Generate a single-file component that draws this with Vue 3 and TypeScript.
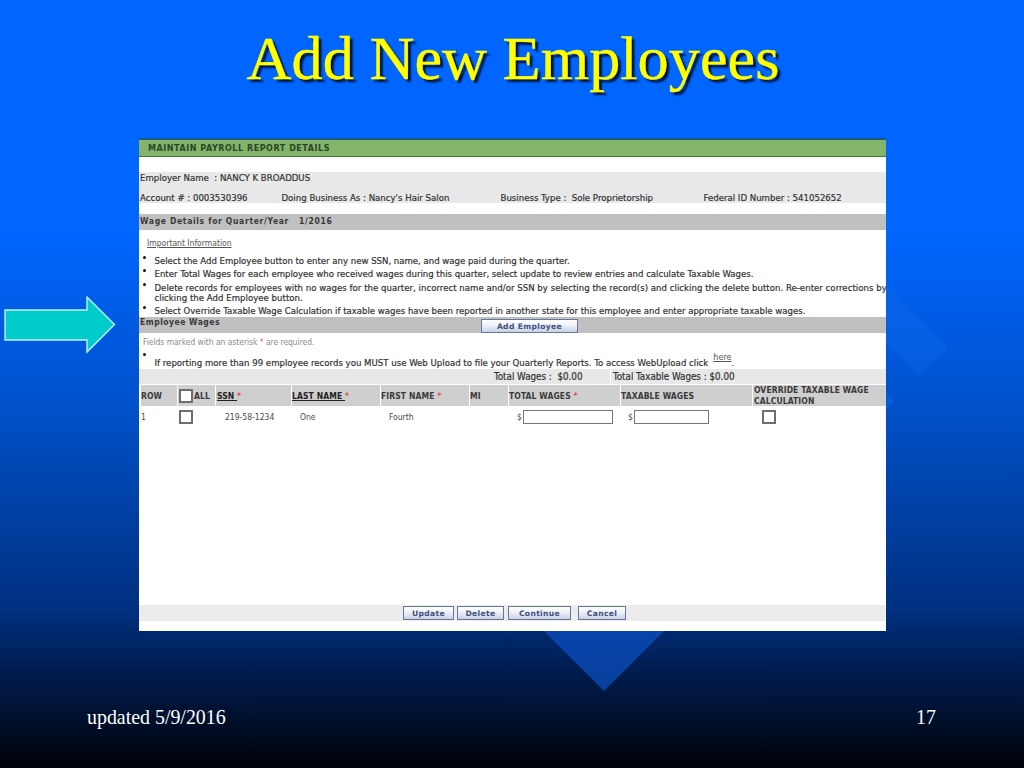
<script setup lang="ts">
const bullets: string[][] = [
  ['Select the Add Employee button to enter any new SSN, name, and wage paid during the quarter.'],
  ['Enter Total Wages for each employee who received wages during this quarter, select update to review entries and calculate Taxable Wages.'],
  ['Delete records for employees with no wages for the quarter, incorrect name and/or SSN by selecting the record(s) and clicking the delete button. Re-enter corrections by', 'clicking the Add Employee button.'],
  ['Select Override Taxable Wage Calculation if taxable wages have been reported in another state for this employee and enter appropriate taxable wages.'],
]
const actions = [
  { label: 'Update', cls: 'a-update' },
  { label: 'Delete', cls: 'a-delete' },
  { label: 'Continue', cls: 'a-continue' },
  { label: 'Cancel', cls: 'a-cancel' },
]
</script>

<template>
  <div class="slide">
    <svg class="backdrop" width="1024" height="768" viewBox="0 0 1024 768" aria-hidden="true">
      <defs>
        <linearGradient id="dia" gradientUnits="userSpaceOnUse" x1="0" y1="280" x2="0" y2="691">
          <stop offset="0" stop-color="#0564ec" />
          <stop offset="0.3" stop-color="#055bd8" />
          <stop offset="1" stop-color="#083f9e" />
        </linearGradient>
      </defs>
      <polygon points="948,347 919,376 790,247 819,218" fill="url(#dia)" />
      <polygon points="895,400 604,691 520,607 811,316" fill="url(#dia)" />
    </svg>

    <h1 class="title">Add New Employees</h1>

    <section class="panel">
      <div class="green">MAINTAIN PAYROLL REPORT DETAILS</div>
      <div class="info">
        <div class="info-line">Employer Name &nbsp;: NANCY K BROADDUS</div>
        <div class="info-line cols">
          <span class="c1">Account # : 0003530396</span>
          <span class="c2">Doing Business As : Nancy's Hair Salon</span>
          <span class="c3">Business Type : &nbsp;Sole Proprietorship</span>
          <span>Federal ID Number : 541052652</span>
        </div>
      </div>
      <div class="bar wage">Wage Details for Quarter/Year &nbsp; 1/2016</div>
      <div class="important"><span>Important Information</span></div>
      <ul class="list">
        <li v-for="(lines, i) in bullets" :key="i">
          <i class="dot"></i>
          <div><div v-for="line in lines" :key="line" class="line">{{ line }}</div></div>
        </li>
      </ul>
      <div class="bar emp">
        <span class="emp-title">Employee Wages</span>
        <button class="btn add" type="button">Add Employee</button>
      </div>
      <div class="fields">Fields marked with an asterisk <b>*</b> are required.</div>
      <div class="upload">
        <i class="dot"></i>
        <span class="line">If reporting more than 99 employee records you MUST use Web Upload to file your Quarterly Reports. To access WebUpload click</span>
        <a class="here">here</a><span class="period">.</span>
      </div>
      <div class="totals">
        <div class="t1">Total Wages : &nbsp;$0.00</div>
        <div class="t2">Total Taxable Wages : $0.00</div>
      </div>
      <div class="grid">
        <div class="th">ROW</div>
        <div class="th th-all"><input class="cb" type="checkbox" />ALL</div>
        <div class="th th-ssn"><u>SSN&nbsp;</u><em>*</em></div>
        <div class="th"><u>LAST NAME&nbsp;</u><em>*</em></div>
        <div class="th">FIRST NAME <em>*</em></div>
        <div class="th">MI</div>
        <div class="th">TOTAL WAGES <em>*</em></div>
        <div class="th">TAXABLE WAGES</div>
        <div class="th th-wrap">OVERRIDE TAXABLE WAGE CALCULATION</div>

        <div class="td">1</div>
        <div class="td"><input class="cb" type="checkbox" /></div>
        <div class="td ssn">219-58-1234</div>
        <div class="td last">One</div>
        <div class="td first">Fourth</div>
        <div class="td"></div>
        <div class="td money m1"><span>$</span><input class="field f1" type="text" /></div>
        <div class="td money m2"><span>$</span><input class="field f2" type="text" /></div>
        <div class="td over"><input class="cb" type="checkbox" /></div>
      </div>
      <div class="spacer"></div>
      <div class="actions">
        <button v-for="a in actions" :key="a.label" class="btn" :class="a.cls" type="button">{{ a.label }}</button>
      </div>
    </section>

    <svg class="arrow" width="120" height="62" viewBox="0 0 120 62" aria-hidden="true">
      <polygon points="5,14 87,14 87,1 114.5,28.5 87,56 87,44 5,44" fill="#00cccc" stroke="#c4f0f6" stroke-width="1.4" />
    </svg>

    <footer class="foot">
      <span>updated 5/9/2016</span>
      <span>17</span>
    </footer>
  </div>
</template>

<style>
html, body { margin: 0; background: #000; }
</style>

<style scoped>
.slide {
  position: relative;
  width: 1024px;
  height: 768px;
  overflow: hidden;
  background: linear-gradient(180deg, #0066ff 0, #0066ff 230px, #0052cc 400px, #003080 610px, #001a48 680px, #000308 768px);
  font-family: "DejaVu Sans Condensed", "DejaVu Sans", sans-serif;
}
.backdrop { position: absolute; left: 0; top: 0; }
.arrow { position: absolute; left: 0; top: 296px; }
.title {
  position: relative;
  margin: 0;
  height: 138px;
  box-sizing: border-box;
  padding: 23px 0 0 2px;
  text-align: center;
  font: 400 62.3px/70px "Liberation Serif", serif;
  color: #ffff00;
  text-shadow: 3px 3px 2px #00123a;
  -webkit-text-stroke: 0.4px #ffff00;
}
.panel {
  position: relative;
  display: flex;
  flex-direction: column;
  margin-left: 139px;
  width: 747px;
  height: 493px;
  overflow: hidden;
  background: #fff;
  border-top: 2px solid #1d5a86;
  box-sizing: border-box;
  color: #333;
  font-size: 9.5px;
  white-space: nowrap;
}
.green {
  flex: none;
  height: 16px;
  box-sizing: content-box;
  padding-left: 9px;
  background: #82b46a;
  border-bottom: 1px solid #3f7a3a;
  color: #2c4527;
  font: 700 8px/18px "DejaVu Sans", sans-serif;
  letter-spacing: 0.55px;
}
.info {
  flex: none;
  margin-top: 15px;
  height: 31px;
  background: #e8e8e8;
  font-size: 9.55px;
  -webkit-text-stroke: 0.2px #333;
}
.info-line { height: 10px; line-height: 10px; padding-left: 1px; }
.info-line:first-child { margin-top: 1px; }
.cols { display: flex; margin-top: 10px; }
.c1 { width: 141.5px; }
.c2 { width: 219px; }
.c3 { width: 203px; }
.bar { flex: none; background: #c0c0c0; }
.wage {
  margin-top: 11px;
  height: 16px;
  padding-left: 1px;
  font: 700 8.5px/15px "DejaVu Sans Condensed", sans-serif;
  letter-spacing: 0.67px;
  color: #3a3a3a;
}
.important {
  flex: none;
  height: 26px;
  padding: 8px 0 0 8px;
  box-sizing: border-box;
  line-height: 10px;
  font-size: 8.5px;
  color: #555;
}
.important span { text-decoration: underline; }
.list {
  flex: none;
  list-style: none;
  margin: 0;
  padding: 0;
  height: 61px;
  display: flex;
  flex-direction: column;
  gap: 3px;
}
.list li { display: flex; }
.list li:nth-child(3) { margin-top: 1px; letter-spacing: 0.04px; }
.line { line-height: 10px; -webkit-text-stroke: 0.2px #333; }
.dot {
  flex: none;
  display: block;
  width: 3px;
  height: 3px;
  margin: 0 8.5px 0 4px;
  border-radius: 50%;
  background: #111;
}
.emp {
  display: flex;
  align-items: flex-start;
  height: 16px;
}
.emp-title {
  width: 342px;
  padding-left: 1px;
  box-sizing: border-box;
  font: 700 8.5px/11px "DejaVu Sans Condensed", sans-serif;
  letter-spacing: 0.5px;
  color: #3a3a3a;
}
.btn {
  padding: 0;
  height: 14px;
  box-sizing: border-box;
  border: 1px solid #66789a;
  border-radius: 0;
  background: linear-gradient(180deg, #ffffff 0, #eef0f7 45%, #c9d0e6 100%);
  color: #3d5080;
  font: 700 7.6px/13px "DejaVu Sans", sans-serif;
  letter-spacing: 0.35px;
  text-align: center;
}
.add { width: 97px; margin-top: 2px; }
.fields {
  flex: none;
  height: 15px;
  padding: 4px 0 0 4px;
  box-sizing: border-box;
  line-height: 10px;
  font-size: 8.4px;
  color: #8a8a8a;
}
.fields b { color: #d66; font-weight: 400; }
.upload {
  flex: none;
  position: relative;
  display: flex;
  height: 21px;
  padding-top: 10px;
  box-sizing: border-box;
  font-size: 9.55px;
}
.upload .dot { margin-top: -5px; }
.here { margin-left: 5px; margin-top: -6px; color: #555; text-decoration: underline; line-height: 10px; font-size: 9px; }
.period { line-height: 10px; }
.totals {
  flex: none;
  display: flex;
  gap: 1px;
  height: 15px;
  line-height: 15px;
  font-size: 9.75px;
  -webkit-text-stroke: 0.2px #333;
}
.t1 { width: 471px; padding-left: 355px; box-sizing: border-box; background: #e8e8e8; }
.t2 { flex: 1; padding-left: 2px; background: #e8e8e8; }
.grid {
  flex: none;
  display: grid;
  grid-template-columns: 36px 37px 75px 88px 88px 38px 111px 131px 134px;
  grid-template-rows: 21px 22px;
  column-gap: 1px;
  margin: 1px 0 0 2px;
}
.th {
  background: #cfcfcf;
  font-weight: 700;
  font-size: 8.5px;
  line-height: 22px;
  color: #3a3a3a;
  letter-spacing: 0.1px;
}
.th u { color: #222; }
.th em { font-style: normal; color: #d9534f; }
.th-all { display: flex; align-items: center; gap: 1px; }
.th-ssn { padding-left: 1px; }
.th-wrap { white-space: normal; line-height: 10.5px; padding-left: 1px; }
.cb {
  appearance: none;
  -webkit-appearance: none;
  display: block;
  flex: none;
  margin: 0 0 0 1px;
  width: 14px;
  height: 14px;
  box-sizing: border-box;
  border: 2px solid #6e6e6e;
  background: #fff;
}
.td {
  display: flex;
  align-items: center;
  font-size: 8.5px;
  color: #4a4a4a;
}
.ssn { padding-left: 9px; }
.last { padding-left: 8px; }
.first { padding-left: 8px; }
.money { gap: 1px; }
.m1 { padding-left: 8px; }
.m2 { padding-left: 7px; }
.field {
  display: block;
  height: 14px;
  padding: 0;
  box-sizing: border-box;
  border: 1px solid #777;
  background: #fff;
}
.f1 { width: 90px; }
.f2 { width: 75px; }
.over { padding-left: 8px; }
.spacer { flex: 1; }
.actions {
  flex: none;
  display: flex;
  height: 16px;
  margin-bottom: 10px;
  padding: 1px 0 0 264px;
  box-sizing: border-box;
  background: #ececec;
}
.a-update { width: 51px; }
.a-delete { width: 47px; margin-left: 3px; }
.a-continue { width: 63px; margin-left: 4px; }
.a-cancel { width: 48px; margin-left: 7px; }
.foot {
  position: relative;
  display: flex;
  justify-content: space-between;
  margin-top: 74px;
  padding: 0 88px 0 87px;
  font: 400 19.9px/24px "Liberation Serif", serif;
  color: #fff;
}
</style>
